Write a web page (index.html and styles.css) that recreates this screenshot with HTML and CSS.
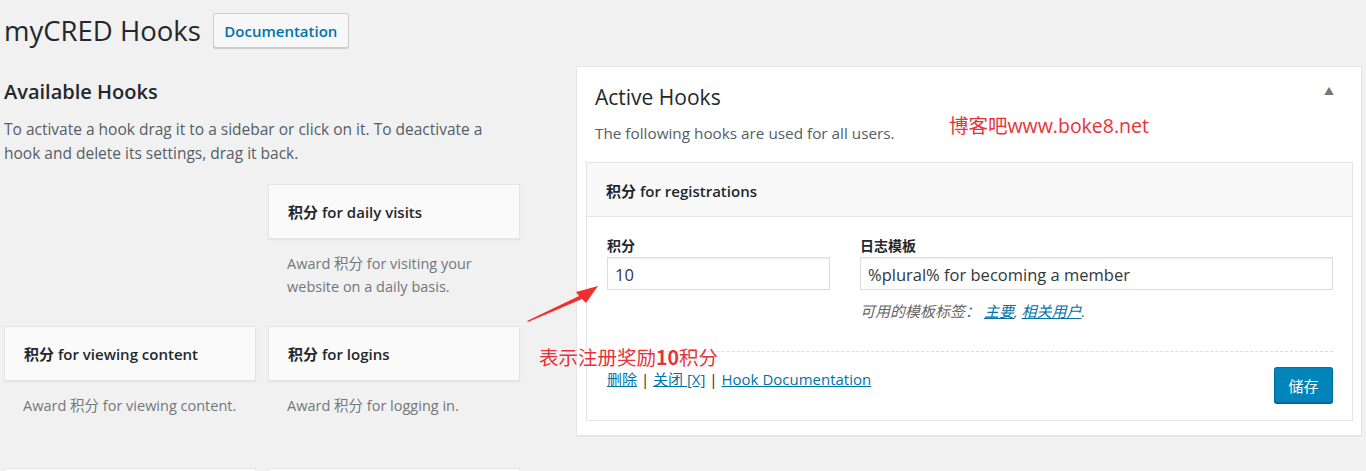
FILE: index.html
```html
<!DOCTYPE html>
<html lang="zh-CN">
<head>
<meta charset="utf-8">
<title>myCRED Hooks</title>
<link rel="stylesheet" href="styles.css">
</head>
<body>
<div class="wrap">
  <header class="page-head">
    <h1 class="page-title">myCRED Hooks</h1>
    <a class="btn-doc" href="#">Documentation</a>
  </header>

  <div class="columns">
    <section class="available">
      <h2 class="avail-title">Available Hooks</h2>
      <p class="avail-desc">To activate a hook drag it to a sidebar or click on it. To deactivate a hook and delete its settings, drag it back.</p>
      <div class="hook-grid">
        <div class="hook-cell empty"></div>
        <div class="hook-cell">
          <div class="hook-card">积分 for daily visits</div>
          <p class="hook-desc">Award 积分 for visiting your website on a daily basis.</p>
        </div>
        <div class="hook-cell">
          <div class="hook-card">积分 for viewing content</div>
          <p class="hook-desc">Award 积分 for viewing content.</p>
        </div>
        <div class="hook-cell">
          <div class="hook-card">积分 for logins</div>
          <p class="hook-desc">Award 积分 for logging in.</p>
        </div>
        <div class="hook-cell">
          <div class="hook-card"></div>
        </div>
        <div class="hook-cell">
          <div class="hook-card"></div>
        </div>
      </div>
    </section>

    <section class="active-panel">
      <div class="panel-head">
        <h2 class="panel-title">Active Hooks</h2>
        <span class="toggle">&#9650;</span>
      </div>
      <p class="panel-desc">The following hooks are used for all users.</p>
      <span class="watermark">博客吧www.boke8.net</span>

      <div class="hook-box">
        <div class="hook-box-head">积分 for registrations</div>
        <div class="hook-box-body">
          <div class="fields">
            <div class="field field-points">
              <label class="field-label">积分</label>
              <div class="input">10</div>
            </div>
            <div class="field field-log">
              <label class="field-label">日志模板</label>
              <div class="input">%plural% for becoming a member</div>
              <p class="help">可用的模板标签： <a href="#">主要</a>, <a href="#">相关用户</a>.</p>
            </div>
          </div>
          <div class="hook-actions">
            <div class="links"><a href="#">删除</a> | <a href="#">关闭 [X]</a> | <a href="#">Hook Documentation</a></div>
            <button class="btn-save">储存</button>
          </div>
        </div>
      </div>
    </section>
  </div>

  <div class="annotation">表示注册奖励<b>10</b>积分</div>
  <svg class="arrow" width="80" height="44" viewBox="0 0 80 44">
    <polygon points="0,36 52,11 49,7 71,1 59,18 55,14 1,37" fill="#f0302f"/>
  </svg>
</div>
</body>
</html>
```

FILE: styles.css
```css
html, body {
  margin: 0;
  padding: 0;
}
body {
  background: #f1f1f1;
  color: #23282d;
  font-family: "Open Sans", "Noto Sans CJK SC", sans-serif;
  height: 471px;
  overflow: hidden;
}
.wrap {
  position: relative;
  height: 471px;
  overflow: hidden;
  padding: 0 0 0 4px;
}
.page-head {
  display: flex;
  align-items: center;
  gap: 12px;
  padding-top: 13px;
}
.page-title {
  margin: 0;
  font-size: 27.5px;
  font-weight: 400;
  line-height: 35px;
  color: #23282d;
}
.btn-doc {
  display: inline-flex;
  align-items: center;
  justify-content: center;
  box-sizing: border-box;
  width: 136px;
  height: 35px;
  background: #f7f7f7;
  border: 1px solid #ccc;
  border-radius: 3px;
  box-shadow: 0 1px 0 #ccc;
  color: #0073aa;
  font-size: 15px;
  font-weight: 600;
  text-decoration: none;
}
.columns {
  display: grid;
  grid-template-columns: 516px 786px;
  column-gap: 56px;
  align-items: start;
  margin-top: 18px;
}
.avail-title {
  margin: 12px 0 11px;
  font-size: 20px;
  line-height: 28px;
  font-weight: 600;
}
.avail-desc {
  margin: 0;
  font-size: 15.5px;
  line-height: 24px;
  color: #555d66;
}
.hook-grid {
  display: grid;
  grid-template-columns: 252px 252px;
  grid-auto-rows: 142px;
  column-gap: 12px;
  margin-top: 19px;
}
.hook-card {
  box-sizing: border-box;
  height: 55px;
  display: flex;
  align-items: center;
  padding-left: 19px;
  background: #fafafa;
  border: 1px solid #e5e5e5;
  box-shadow: 0 1px 1px rgba(0,0,0,.05);
  font-size: 15px;
  font-weight: 600;
  color: #23282d;
}
.hook-desc {
  margin: 13px 0 0;
  padding-left: 19px;
  font-size: 14.5px;
  line-height: 23px;
  color: #72777c;
}
.active-panel {
  position: relative;
  box-sizing: border-box;
  height: 370px;
  background: #fff;
  border: 1px solid #e5e5e5;
  box-shadow: 0 1px 1px rgba(0,0,0,.04);
}
.panel-head {
  display: flex;
  justify-content: space-between;
  align-items: flex-start;
  padding: 16px 27px 0 18px;
}
.panel-title {
  margin: 0;
  font-size: 21px;
  line-height: 28px;
  font-weight: 500;
  color: #23282d;
}
.toggle {
  font-size: 10px;
  line-height: 12px;
  color: #72777c;
  margin-top: 2px;
}
.panel-desc {
  margin: 10px 0 0 18px;
  font-size: 15.3px;
  line-height: 24px;
  color: #555d66;
}
.watermark {
  position: absolute;
  left: 372px;
  top: 46px;
  font-size: 19.5px;
  line-height: 26px;
  color: #e8323a;
}
.hook-box {
  margin: 17px 8px 0 9px;
  border: 1px solid #e5e5e5;
}
.hook-box-head {
  box-sizing: border-box;
  height: 54px;
  display: flex;
  align-items: center;
  padding-left: 19px;
  padding-top: 2px;
  background: #f9f9f9;
  border-bottom: 1px solid #e5e5e5;
  font-size: 15px;
  font-weight: 600;
}
.hook-box-body {
  padding: 19px 19px 17px 20px;
}
.fields {
  display: flex;
  gap: 30px;
  padding-bottom: 30px;
  border-bottom: 1px dashed #ddd;
}
.field-points {
  width: 223px;
}
.field-log {
  flex: 1;
}
.field-label {
  display: block;
  font-size: 14px;
  font-weight: 600;
  line-height: 20px;
  margin-bottom: 1px;
}
.input {
  box-sizing: border-box;
  height: 33px;
  display: flex;
  align-items: center;
  padding-left: 7px;
  padding-top: 2px;
  border: 1px solid #ddd;
  box-shadow: inset 0 1px 2px rgba(0,0,0,.07);
  font-size: 16.5px;
  color: #32373c;
  background: #fff;
}
.help {
  margin: 11px 0 0;
  font-size: 15px;
  line-height: 20px;
  font-style: italic;
  color: #666;
}
.help a,
.links a {
  color: #0073aa;
  text-decoration: underline;
}
.hook-actions {
  display: flex;
  justify-content: space-between;
  align-items: flex-start;
  padding-top: 15px;
}
.links {
  font-size: 15px;
  line-height: 24px;
  color: #23282d;
}
.btn-save {
  box-sizing: border-box;
  width: 59px;
  height: 36px;
  background: #0085ba;
  border: 1px solid #0073aa;
  border-color: #0073aa #006799 #006799;
  border-radius: 3px;
  box-shadow: 0 1px 0 #006799;
  color: #fff;
  font-family: "Noto Sans CJK SC", sans-serif;
  font-size: 15px;
  padding: 0;
}
.annotation {
  position: absolute;
  left: 539px;
  top: 344px;
  font-size: 19.5px;
  line-height: 26px;
  color: #e8323a;
  font-family: "Noto Sans CJK SC", sans-serif;
}
.annotation b {
  font-weight: 700;
}
.arrow {
  position: absolute;
  left: 527px;
  top: 285px;
}
```
